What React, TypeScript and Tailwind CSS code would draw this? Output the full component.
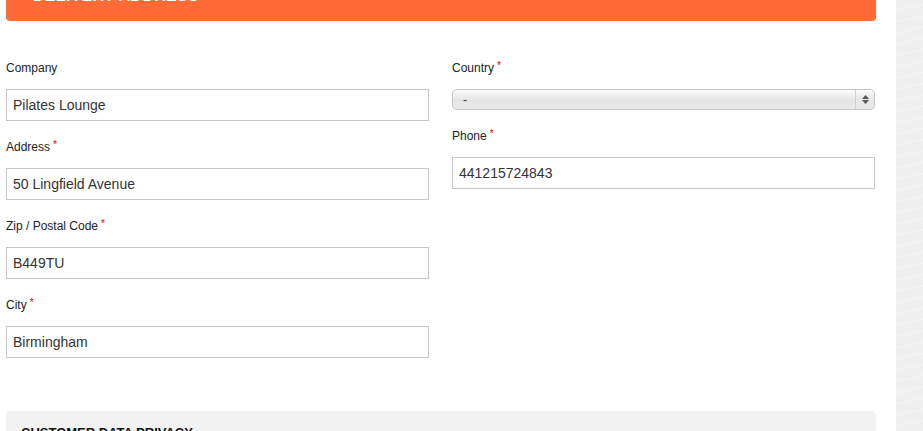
import React from "react";

interface FieldProps {
  label: string;
  value: string;
  required?: boolean;
}

function Label({ label, required }: { label: string; required?: boolean }) {
  return (
    <div className="h-4 mb-[13px] text-[12px] leading-4 text-[#222]">
      {label}
      {required && <sup className="ml-[3px] text-[10px] text-[#e00000] relative -top-[3px]">*</sup>}
    </div>
  );
}

function Field({ label, value, required }: FieldProps) {
  return (
    <div className="mb-[18px]">
      <Label label={label} required={required} />
      <div className="h-8 border border-[#c8c8c8] bg-white px-[6px] flex items-center text-[14px] text-[#333]">
        {value}
      </div>
    </div>
  );
}

function CountrySelect() {
  return (
    <div className="mb-[18px]">
      <Label label="Country" required />
      <div className="h-[21px] rounded-[5px] border border-[#c4c4c4] bg-[linear-gradient(to_bottom,#fbfbfb,#e4e4e4_55%,#ececec)] flex items-center">
        <span className="flex-1 pl-[10px] text-[12px] leading-none text-[#333]">-</span>
        <span className="w-[19px] h-full border-l border-[#cfcfcf] flex flex-col items-center justify-center gap-[1px]">
          <svg width="7" height="4" viewBox="0 0 7 4"><path d="M3.5 0L7 4H0z" fill="#555" /></svg>
          <svg width="7" height="4" viewBox="0 0 7 4"><path d="M0 0h7L3.5 4z" fill="#555" /></svg>
        </span>
      </div>
    </div>
  );
}

export default function App() {
  return (
    <div className="w-[923px] h-[431px] overflow-hidden flex font-['Liberation_Sans',Arial,sans-serif] bg-white">
      <div className="w-[896px] shrink-0 pl-[6px] pr-[20px]">
        <div className="-mt-[29px] h-[50px] rounded-b-[4px] bg-[#ff6b36] px-[27px] pt-[17px]">
          <h2 className="text-[16px] leading-4 font-bold tracking-[0.3px] text-white uppercase">Delivery Address</h2>
        </div>

        <div className="mt-[39px] grid grid-cols-[423px_423px] gap-x-[23px]">
          <div>
            <Field label="Company" value="Pilates Lounge" />
            <Field label="Address" value="50 Lingfield Avenue" required />
            <Field label="Zip / Postal Code" value="B449TU" required />
            <Field label="City" value="Birmingham" required />
          </div>
          <div>
            <CountrySelect />
            <Field label="Phone" value="441215724843" required />
          </div>
        </div>

        <div className="mt-[35px] rounded-t-[5px] bg-[#f2f2f2] px-[15px] pt-[12px]">
          <h3 className="text-[13px] font-bold uppercase text-[#111]">Customer Data Privacy</h3>
        </div>
      </div>
      <div className="flex-1 bg-[repeating-linear-gradient(-12deg,#efefef_0px,#efefef_9px,#f5f5f5_10px,#efefef_11px)]" />
    </div>
  );
}
